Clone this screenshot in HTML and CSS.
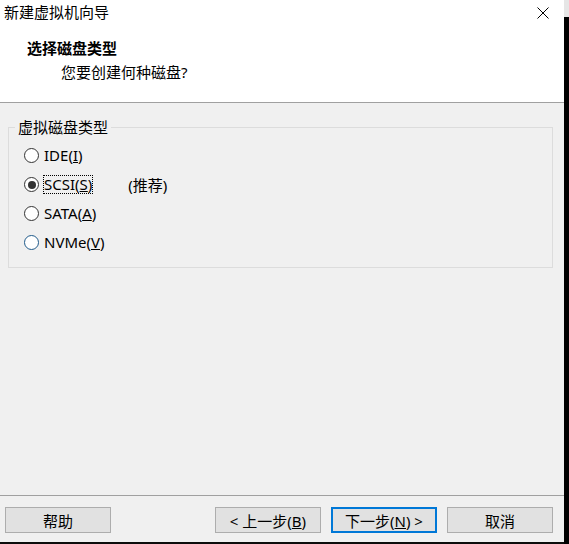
FILE: index.html
```html
<!doctype html>
<html lang="zh-CN">
  <head>
    <meta charset="UTF-8" />
    <title>新建虚拟机向导</title>
    <link rel="stylesheet" href="styles.css">
  </head>
  <body>
    <div class="desk">
      <div class="window">
        <div class="header">
          <div class="titlebar">
            <span class="title">新建虚拟机向导</span>
            <svg class="close" width="12" height="12" viewBox="0 0 12 12">
              <path d="M0.5 0.5 L11.5 11.5 M11.5 0.5 L0.5 11.5" stroke="#000" stroke-width="1" fill="none" />
            </svg>
          </div>
          <div class="page-title">选择磁盘类型</div>
          <div class="page-sub">您要创建何种磁盘?</div>
        </div>

        <div class="content">
          <fieldset class="group">
            <legend>虚拟磁盘类型</legend>
            <div class="option">
              <span class="radio"></span>
              <span class="label">IDE(<u>I</u>)</span>
            </div>
            <div class="option">
              <span class="radio checked"></span>
              <span class="label focused">SCSI(<u>S</u>)</span>
              <span class="hint">(推荐)</span>
            </div>
            <div class="option">
              <span class="radio"></span>
              <span class="label">SATA(<u>A</u>)</span>
            </div>
            <div class="option">
              <span class="radio hover"></span>
              <span class="label">NVMe(<u>V</u>)</span>
            </div>
          </fieldset>
        </div>

        <div class="footer">
          <button class="btn">帮助</button>
          <button class="btn push">&lt; 上一步(<u>B</u>)</button>
          <button class="btn primary">下一步(<u>N</u>) &gt;</button>
          <button class="btn">取消</button>
        </div>
      </div>
      <div class="edge">
        <div class="edge-top"></div>
      </div>
    </div>
  </body>
</html>
```

FILE: styles.css
```css
body {
  margin: 0;
  padding: 0;
  background: #0c0c0c;
  font-family: 'Noto Sans', 'Noto Sans CJK SC', sans-serif;
  font-size: 15px;
  color: #000;
  overflow: hidden;
}

.desk {
  display: flex;
  height: 544px;
}

.window {
  width: 564px;
  height: 542px;
  display: flex;
  flex-direction: column;
  background: #f0f0f0;
}

.header {
  box-sizing: border-box;
  height: 103px;
  background: #fff;
  border-bottom: 1px solid #a0a0a0;
}

.titlebar {
  display: flex;
  justify-content: space-between;
  align-items: center;
  height: 25px;
  padding-left: 4px;
}

.title {
  line-height: 25px;
}

.close {
  margin-right: 15px;
}

.page-title {
  margin-top: 13px;
  padding-left: 27px;
  line-height: 20px;
  font-weight: bold;
}

.page-sub {
  margin-top: 4px;
  padding-left: 61px;
  line-height: 20px;
}

.content {
  box-sizing: border-box;
  height: 393px;
  padding-top: 14px;
  border-bottom: 1px solid #a0a0a0;
}

.group {
  margin: 0 11px 0 8px;
  padding: 4px 0 10px 0;
  border: 1px solid #dcdcdc;
}

.group legend {
  margin-left: 6px;
  padding: 0 3px;
  line-height: 20px;
}

.option {
  display: flex;
  align-items: center;
  height: 29px;
  padding-left: 15px;
}

.radio {
  box-sizing: border-box;
  width: 15px;
  height: 15px;
  margin-right: 4px;
  border: 1px solid #333;
  border-radius: 50%;
  background: #fff;
  display: flex;
  align-items: center;
  justify-content: center;
}

.radio.checked::after {
  content: '';
  width: 8px;
  height: 8px;
  border-radius: 50%;
  background: #333;
}

.radio.hover {
  border-color: #1f5a8a;
}

.label {
  border: 1px dotted transparent;
  line-height: 17px;
}

.label.focused {
  border-color: #000;
}

.hint {
  margin-left: 35px;
}

.footer {
  display: flex;
  gap: 10px;
  padding: 11px 11px 0 5px;
}

.btn {
  box-sizing: border-box;
  width: 106px;
  height: 26px;
  padding: 0;
  background: #e1e1e1;
  border: 1px solid #adadad;
  font-family: inherit;
  font-size: 15px;
  color: #000;
}

.btn.push {
  margin-left: auto;
}

.btn.primary {
  border: 2px solid #0078d7;
}

.edge {
  width: 5px;
  background: #000;
}

.edge-top {
  height: 17px;
  background: #e6e6e6;
}
```
